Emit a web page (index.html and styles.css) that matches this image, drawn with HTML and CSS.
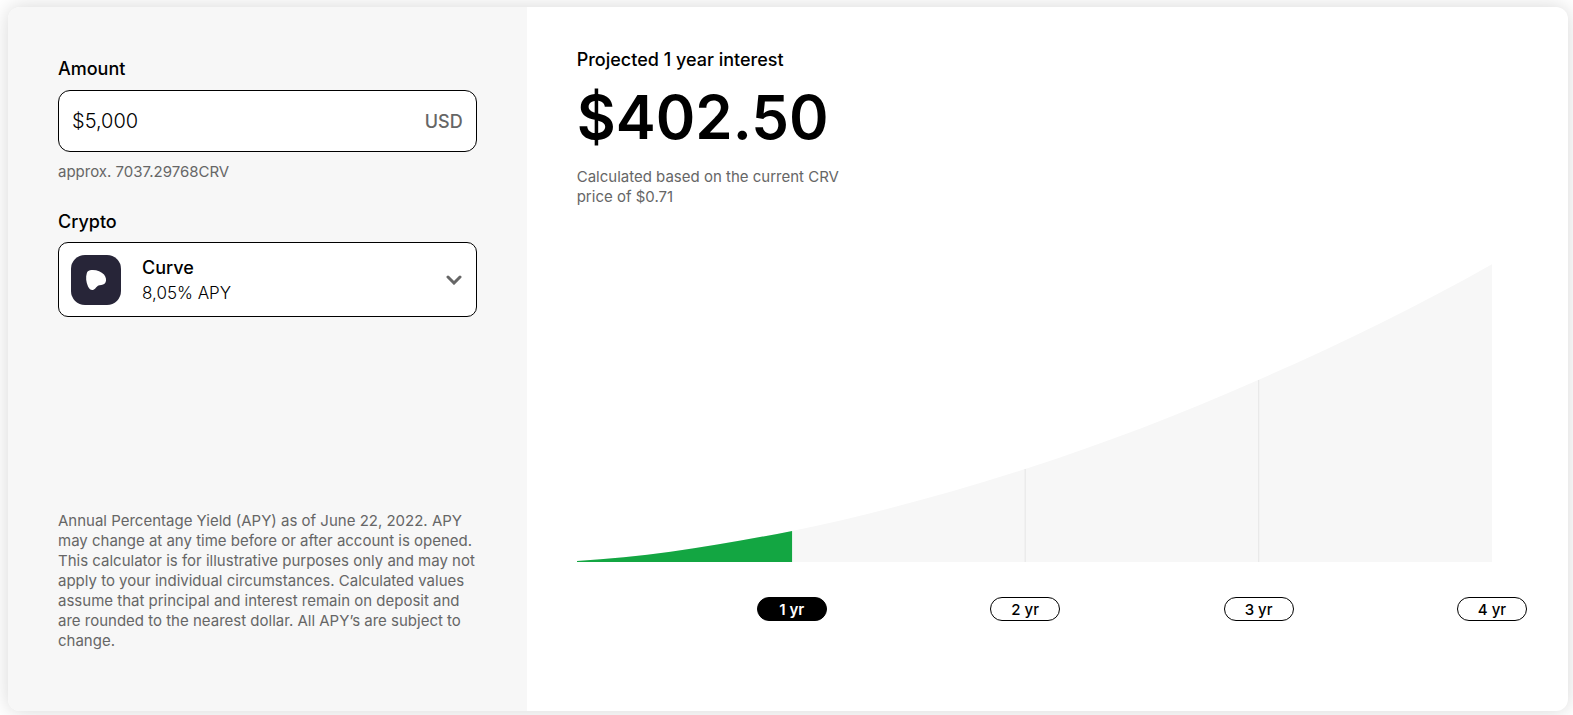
FILE: index.html
```html
<!DOCTYPE html>
<html lang="en">
<head>
    <meta charset="UTF-8">
    <meta name="viewport" content="width=device-width, initial-scale=1.0">
    <title>Interest Calculator</title>
    <link rel="stylesheet" href="styles.css">
</head>
<body>
    <main class="calculator">
        <section class="settings">
            <label class="label" for="amount">Amount</label>
            <div class="amount-field">
                <input type="text" id="amount" value="$5,000">
                <span class="currency">USD</span>
            </div>
            <p class="note">approx. 7037.29768CRV</p>

            <label class="label crypto-label" for="crypto">Crypto</label>
            <div class="crypto-field">
                <select id="crypto">
                    <option>Curve</option>
                </select>
                <div class="crypto-info">
                    <svg class="crypto-logo" viewBox="0 0 50 50" aria-hidden="true">
                        <rect width="50" height="50" rx="14" fill="#272538"/>
                        <path d="M19 15.2C24 14.2 30 16 33 19.5C35 22 35.6 25 34.6 27.2C33.5 29.6 31 29.8 28.5 30.2C25.5 30.8 25 33.5 22.5 34.8C20.5 35.6 18.5 34.5 17 31.5C15 27 14.6 22 15.8 18.2C16.4 16.4 17.2 15.6 19 15.2Z" fill="#fff"/>
                    </svg>
                    <span class="apy">8,05% APY</span>
                    <svg class="chevron" viewBox="0 0 16 10" aria-hidden="true">
                        <path d="M2 2L8 8L14 2" fill="none" stroke="#666" stroke-width="3" stroke-linecap="round"/>
                    </svg>
                </div>
            </div>

            <p class="note disclaimer">Annual Percentage Yield (APY) as of June 22, 2022. APY may change at any time before or after account is opened. This calculator is for illustrative purposes only and may not apply to your individual circumstances. Calculated values assume that principal and interest remain on deposit and are rounded to the nearest dollar. All APY’s are subject to change.</p>
        </section>

        <section class="result">
            <h2 class="label">Projected 1 year interest</h2>
            <p class="total">$402.50</p>
            <p class="note price-note">Calculated based on the current CRV price of $0.71</p>

            <div class="chart">
                <svg class="graph" viewBox="0 0 915 298" preserveAspectRatio="none" aria-hidden="true">
                    <path d="M0 297C72 293 143 281 215 267C293 251 370 230 448 205C526 180 604 150 681 116C759 82 837 44 915 0V298H0Z" fill="#f7f7f7"/>
                    <path d="M0 297C72 293 143 281 215 267V298H0Z" fill="#13a642"/>
                    <path d="M448 205V298M681.5 116V298" stroke="#e6e6e6"/>
                </svg>
                <div class="years">
                    <button type="button" class="active">1 yr</button>
                    <button type="button">2 yr</button>
                    <button type="button">3 yr</button>
                    <button type="button">4 yr</button>
                </div>
            </div>
        </section>
    </main>
</body>
</html>
```
FILE: styles.css
```css
* {
    box-sizing: border-box;
}

body {
    margin: 0;
    padding: 7px 5px 4px 8px;
    font-family: Inter, sans-serif;
    color: #000;
    background-color: #fff;
}

h2, p {
    margin: 0;
}

.calculator {
    display: grid;
    grid-template-columns: 33.25% 1fr;
    min-height: calc(100vh - 11px);
    border-radius: 12px;
    background-color: #fff;
    box-shadow: 0 0 20px rgba(0, 0, 0, 0.16);
    overflow: hidden;
}

.settings {
    display: flex;
    flex-direction: column;
    padding: 50px 50px 60px;
    background-color: #f7f7f7;
}

.label {
    font-size: 18px;
    font-weight: 500;
    line-height: 24px;
}

.note {
    font-size: 15px;
    line-height: 20px;
    color: #666;
}

.amount-field {
    display: flex;
    align-items: center;
    height: 62px;
    margin: 9px 0 10px;
    padding: 0 13px;
    border: 1px solid #000;
    border-radius: 12px;
    background-color: #fff;
}

.amount-field input {
    flex: 1;
    min-width: 0;
    padding: 0;
    border: none;
    outline: none;
    background: none;
    font: 300 20px Inter, sans-serif;
    color: #000;
}

.currency {
    font-size: 18px;
    font-weight: 500;
    color: #666;
}

.crypto-label {
    margin-top: 28px;
}

/* the select fills the box, the logo and rate sit on top of it */
.crypto-field {
    display: grid;
    height: 75px;
    margin-top: 8px;
}

.crypto-field select,
.crypto-info {
    grid-area: 1 / 1;
}

.crypto-field select {
    appearance: none;
    width: 100%;
    padding: 0 50px 25px 83px;
    border: 1px solid #000;
    border-radius: 10px;
    background-color: #fff;
    font: 500 18px Inter, sans-serif;
    color: #000;
    cursor: pointer;
}

.crypto-info {
    display: flex;
    align-items: center;
    padding: 0 15px 0 13px;
    pointer-events: none;
}

.crypto-logo {
    width: 50px;
    height: 50px;
    margin-right: 21px;
}

.apy {
    flex: 1;
    padding-top: 26px;
    font-size: 17px;
    font-weight: 300;
    line-height: 24px;
}

.chevron {
    width: 16px;
    height: 10px;
}

.disclaimer {
    margin-top: auto;
}

.result {
    padding: 41px 76px 60px 50px;
}

.total {
    margin: 9px 0 14px;
    font-size: 60px;
    font-weight: 600;
    line-height: 72px;
}

.price-note {
    max-width: 280px;
}

.chart {
    margin-top: 57px;
}

.graph {
    display: block;
    width: 100%;
    height: 298px;
}

/* each pill is centred under its year on the graph */
.years {
    display: flex;
    justify-content: space-between;
    margin: 35px -35px 0 calc(23.5% - 35px);
}

.years button {
    width: 70px;
    height: 24px;
    padding: 0;
    border: 1px solid #000;
    border-radius: 12px;
    background-color: #fff;
    font: 500 15px Inter, sans-serif;
    color: #000;
    cursor: pointer;
}

.years .active {
    background-color: #000;
    font-weight: 600;
    color: #fff;
}
```
